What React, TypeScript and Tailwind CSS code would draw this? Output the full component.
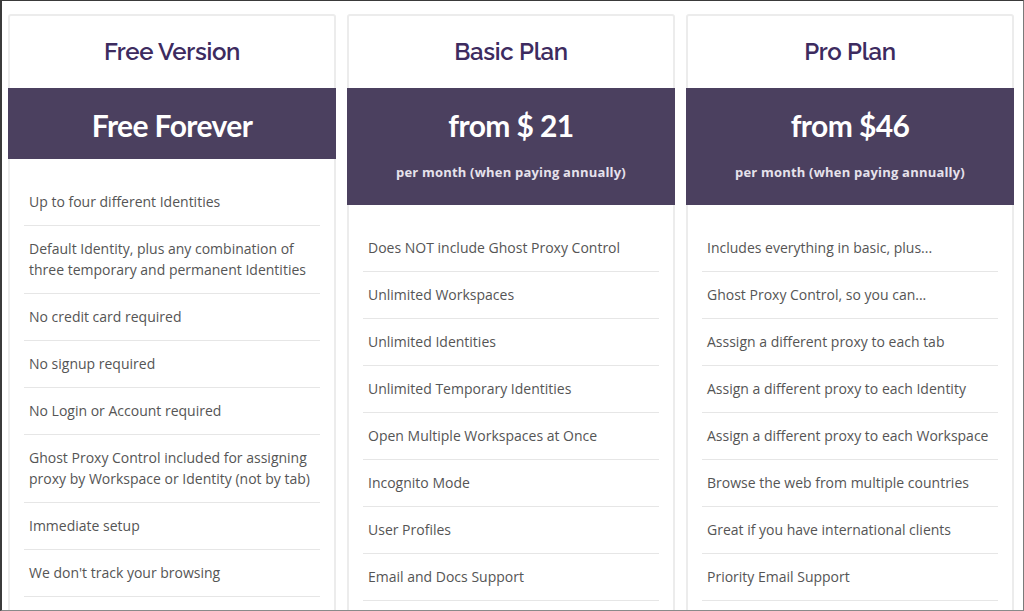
const plans = [
  {
    title: "Free Version",
    price: "Free Forever",
    note: "",
    items: [
      "Up to four different Identities",
      "Default Identity, plus any combination of three temporary and permanent Identities",
      "No credit card required",
      "No signup required",
      "No Login or Account required",
      "Ghost Proxy Control included for assigning proxy by Workspace or Identity (not by tab)",
      "Immediate setup",
      "We don't track your browsing",
    ],
  },
  {
    title: "Basic Plan",
    price: "from $ 21",
    note: "per month (when paying annually)",
    items: [
      "Does NOT include Ghost Proxy Control",
      "Unlimited Workspaces",
      "Unlimited Identities",
      "Unlimited Temporary Identities",
      "Open Multiple Workspaces at Once",
      "Incognito Mode",
      "User Profiles",
      "Email and Docs Support",
    ],
  },
  {
    title: "Pro Plan",
    price: "from $46",
    note: "per month (when paying annually)",
    items: [
      "Includes everything in basic, plus...",
      "Ghost Proxy Control, so you can...",
      "Asssign a different proxy to each tab",
      "Assign a different proxy to each Identity",
      "Assign a different proxy to each Workspace",
      "Browse the web from multiple countries",
      "Great if you have international clients",
      "Priority Email Support",
    ],
  },
];

const PlanCard = ({ plan }: { plan: (typeof plans)[number] }) => {
  return (
    <div className="w-[328px] border-2 border-[#ececec] rounded-[3px] bg-white">
      <div className="h-[72px] flex items-center justify-center">
        <h2 className="text-[24px] font-semibold text-[#3d2b5f] font-['Raleway','Lato',sans-serif] tracking-[-0.3px]">
          {plan.title}
        </h2>
      </div>
      <div className="-mx-[2px] bg-[#4b405f] text-center pt-[19px] pb-[16px]">
        <div className="text-[30px] leading-[36px] font-bold text-white font-['Lato',sans-serif] tracking-[-0.6px]">
          {plan.price}
        </div>
        {plan.note && (
          <div className="mt-[20px] mb-[8px] text-[13px] leading-[18px] font-bold text-[#e6e2ec] font-['Open_Sans',sans-serif] tracking-[0.2px]">
            {plan.note}
          </div>
        )}
      </div>
      <ul className="px-[14px] pt-[20px] pb-[40px] font-['Open_Sans',sans-serif] text-[14px] leading-[21px] text-[#555]">
        {plan.items.map((item) => (
          <li
            key={item}
            className="px-[5px] pt-[12px] pb-[13px] border-b border-[#e6e6e6]"
          >
            {item}
          </li>
        ))}
      </ul>
    </div>
  );
};

const App = () => {
  return (
    <div className="w-[1024px] h-[611px] overflow-hidden bg-white border-t border-l-2 border-[#3a3a3a] border-r border-r-[#7a7a7a] border-b border-b-[#8a8a8a]">
      <div className="flex gap-[11px] pl-[6px] pt-[13px]">
        {plans.map((plan) => (
          <PlanCard key={plan.title} plan={plan} />
        ))}
      </div>
    </div>
  );
};

export default App;
